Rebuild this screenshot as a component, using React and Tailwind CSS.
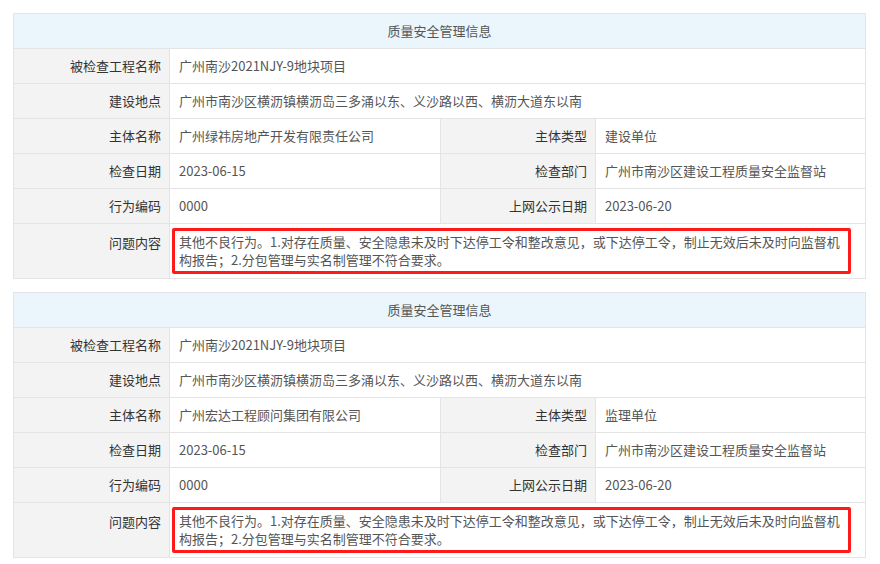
const font = { fontFamily: '"Noto Sans CJK SC", "Liberation Sans", sans-serif' };

const L = "bg-[#f3f3f3] text-right pr-[8px] text-[#333] border border-[#e4e4e4]";
const V = "pl-[9px] text-[#555] border border-[#e4e4e4]";

function Block({ company, type }) {
  return (
    <table className="w-[853px] border-collapse text-[13px] table-fixed" style={font}>
      <colgroup>
        <col className="w-[156px]" />
        <col className="w-[271px]" />
        <col className="w-[155px]" />
        <col />
      </colgroup>
      <tbody>
        <tr className="h-[35px]">
          <td colSpan={4} className="bg-[#eaf5fc] text-center text-[#555] border border-[#e4e4e4]">质量安全管理信息</td>
        </tr>
        <tr className="h-[35px]">
          <td className={L}>被检查工程名称</td>
          <td colSpan={3} className={V}>广州南沙2021NJY-9地块项目</td>
        </tr>
        <tr className="h-[35px]">
          <td className={L}>建设地点</td>
          <td colSpan={3} className={V}>广州市南沙区横沥镇横沥岛三多涌以东、义沙路以西、横沥大道东以南</td>
        </tr>
        <tr className="h-[35px]">
          <td className={L}>主体名称</td>
          <td className={V}>{company}</td>
          <td className={L}>主体类型</td>
          <td className={V}>{type}</td>
        </tr>
        <tr className="h-[35px]">
          <td className={L}>检查日期</td>
          <td className={V}>2023-06-15</td>
          <td className={L}>检查部门</td>
          <td className={V}>广州市南沙区建设工程质量安全监督站</td>
        </tr>
        <tr className="h-[35px]">
          <td className={L}>行为编码</td>
          <td className={V}>0000</td>
          <td className={L}>上网公示日期</td>
          <td className={V}>2023-06-20</td>
        </tr>
        <tr className="h-[52px]">
          <td className={L + " align-top pt-[9px]"}>问题内容</td>
          <td colSpan={3} className="border border-[#e4e4e4] pl-[2px] pr-[14px] py-[4px]">
            <div className="border-[3px] border-[#ff1a1a] rounded-[2px] px-[4px] py-[2px] text-[#555] leading-[18px]">
              其他不良行为。1.对存在质量、安全隐患未及时下达停工令和整改意见，或下达停工令，制止无效后未及时向监督机构报告；2.分包管理与实名制管理不符合要求。
            </div>
          </td>
        </tr>
      </tbody>
    </table>
  );
}

export default function App() {
  return (
    <div className="w-[880px] h-[564px] bg-white overflow-hidden pt-[13px] pl-[13px] flex flex-col gap-[13px]">
      <Block company="广州绿祎房地产开发有限责任公司" type="建设单位" />
      <Block company="广州宏达工程顾问集团有限公司" type="监理单位" />
    </div>
  );
}
